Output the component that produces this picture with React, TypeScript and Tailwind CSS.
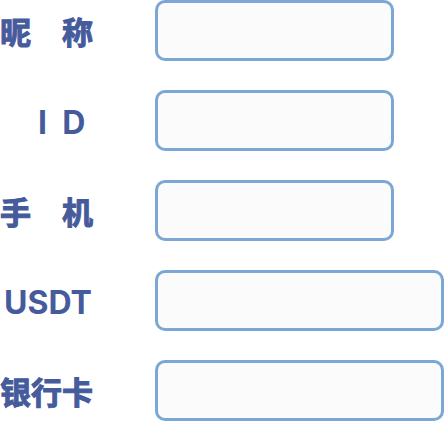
const fields = [
  { id: "nickname", label: "昵　称", latin: false, wide: false },
  { id: "uid", label: "I  D", latin: true, wide: false },
  { id: "phone", label: "手　机", latin: false, wide: false },
  { id: "usdt", label: "USDT", latin: true, wide: true },
  { id: "card", label: "银行卡", latin: false, wide: true },
];

export default function App() {
  return (
    <form className="flex flex-col gap-[29px] bg-white font-['Inter','Noto_Sans_CJK_SC',sans-serif]">
      {fields.map((f) => (
        <div key={f.id} className="flex items-center">
          <label
            htmlFor={f.id}
            className={
              "w-[155px] shrink-0 whitespace-pre pt-[5px] leading-[56px] text-[#465b9c] " +
              (f.latin
                ? "pl-1 text-[32px] font-bold "
                : "text-[31px] font-bold [-webkit-text-stroke:1px_#465b9c] ") +
              (f.id === "uid" ? "pl-[38px]" : "")
            }
          >
            {f.label}
          </label>
          <div className="min-w-0 flex-1">
            <input
              id={f.id}
              type="text"
              className={
                "block h-[61px] rounded-[10px] border-3 border-[#7ca7d4] bg-[#fbfbfb] px-4 text-2xl text-[#465b9c] outline-none " +
                (f.wide ? "w-full" : "w-[239px] max-w-full")
              }
            />
          </div>
        </div>
      ))}
    </form>
  );
}
